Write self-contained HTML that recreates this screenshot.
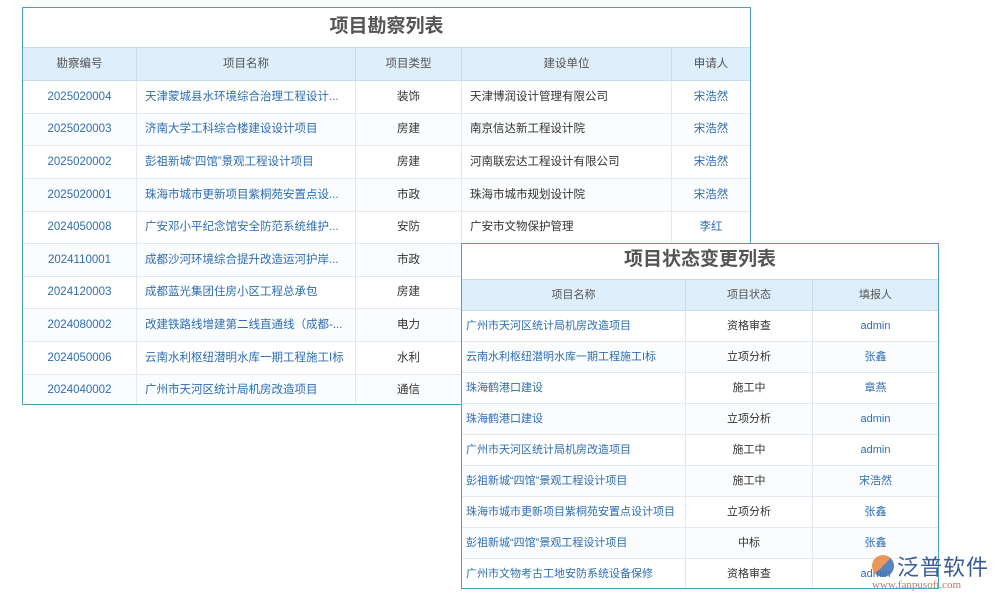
<!DOCTYPE html>
<html><head><meta charset="utf-8"><style>
body{margin:0;width:1000px;height:600px;background:#fff;position:relative;overflow:hidden;font-family:"Liberation Sans","Noto Sans CJK SC",sans-serif;}
.t{position:absolute;background:#fff;border:1px solid #4aa3bd;box-sizing:border-box;overflow:hidden;}
.ttl{text-align:center;font-weight:bold;color:#555;font-size:19px;border-bottom:1px solid #c9dcec;box-sizing:border-box;}
.r{display:flex;border-bottom:1px solid #e3e9ee;box-sizing:border-box;font-size:11.5px;}
.r>div{border-right:1px solid #e3e9ee;box-sizing:border-box;text-align:center;white-space:nowrap;overflow:hidden;text-overflow:ellipsis;padding:0 8px;}
.r>div:last-child{border-right:none;}
.h{background:#deeefb;color:#555;border-bottom-color:#c9dcec;}
.h>div{border-right-color:#c9dcec;}
.r:nth-child(odd):not(.h){background:#fafcfd;}
.l{text-align:left!important;color:#2e6db4;}
.b{color:#2e6db4;}
.k{color:#333;}
.kl{text-align:left!important;color:#333;}
</style></head><body>
<div class="t" style="left:22px;top:7px;width:729px;height:398px;">
<div class="ttl" style="height:40px;line-height:38px;">项目勘察列表</div>
<div id="a"></div>
</div>
<div class="t" style="left:461px;top:243px;width:478px;height:346px;">
<div class="ttl" style="height:36px;line-height:32px;">项目状态变更列表</div>
<div id="b"></div>
</div>
<div style="position:absolute;left:872px;top:555px;width:22px;height:22px;border-radius:50%;background:linear-gradient(135deg,#e8833a 50%,#3c6fb0 50%);opacity:.85"></div>
<div style="position:absolute;left:897px;top:550px;font-size:22px;color:#3a5a95;letter-spacing:1px;">泛普软件</div>
<div style="position:absolute;left:872px;top:579px;font-size:11px;color:#c07a60;font-family:'Liberation Serif',serif;">www.fanpusoft.com</div>
<script>
function mk(id,widths,hh,rows,heights){
 var s='';
 rows.forEach(function(r,i){
  var h=heights[i];
  s+='<div class="r'+(i==0?' h':'')+'" style="height:'+h+'px;line-height:'+(h-1)+'px">';
  r.forEach(function(c,j){
   var cls=i==0?'':c[0];var txt=i==0?c:c[1];
   s+='<div class="'+cls+'" style="'+(widths[j]?'width:'+widths[j]+'px;':'flex:1;')+(id=='b'&&j==0&&i>0?'padding:0 4px;':'')+'">'+txt+'</div>';
  });
  s+='</div>';
 });
 document.getElementById(id).innerHTML=s;
}
var A=[["勘察编号","项目名称","项目类型","建设单位","申请人"],
[["b","2025020004"],["l","天津蒙城县水环境综合治理工程设计..."],["k","装饰"],["kl","天津博润设计管理有限公司"],["b","宋浩然"]],
[["b","2025020003"],["l","济南大学工科综合楼建设设计项目"],["k","房建"],["kl","南京信达新工程设计院"],["b","宋浩然"]],
[["b","2025020002"],["l","彭祖新城“四馆”景观工程设计项目"],["k","房建"],["kl","河南联宏达工程设计有限公司"],["b","宋浩然"]],
[["b","2025020001"],["l","珠海市城市更新项目紫桐苑安置点设..."],["k","市政"],["kl","珠海市城市规划设计院"],["b","宋浩然"]],
[["b","2024050008"],["l","广安邓小平纪念馆安全防范系统维护..."],["k","安防"],["kl","广安市文物保护管理"],["b","李红"]],
[["b","2024110001"],["l","成都沙河环境综合提升改造运河护岸..."],["k","市政"],["kl",""],["b",""]],
[["b","2024120003"],["l","成都蓝光集团住房小区工程总承包"],["k","房建"],["kl",""],["b",""]],
[["b","2024080002"],["l","改建铁路线增建第二线直通线（成都-..."],["k","电力"],["kl",""],["b",""]],
[["b","2024050006"],["l","云南水利枢纽潜明水库一期工程施工I标"],["k","水利"],["kl",""],["b",""]],
[["b","2024040002"],["l","广州市天河区统计局机房改造项目"],["k","通信"],["kl",""],["b",""]]];
mk('a',[114,219,106,210,0],0,A,[33,33,32,33,33,32,33,32,33,33,31]);
var B=[["项目名称","项目状态","填报人"],
[["l","广州市天河区统计局机房改造项目"],["k","资格审查"],["b","admin"]],
[["l","云南水利枢纽潜明水库一期工程施工I标"],["k","立项分析"],["b","张鑫"]],
[["l","珠海鹤港口建设"],["k","施工中"],["b","章燕"]],
[["l","珠海鹤港口建设"],["k","立项分析"],["b","admin"]],
[["l","广州市天河区统计局机房改造项目"],["k","施工中"],["b","admin"]],
[["l","彭祖新城“四馆”景观工程设计项目"],["k","施工中"],["b","宋浩然"]],
[["l","珠海市城市更新项目紫桐苑安置点设计项目"],["k","立项分析"],["b","张鑫"]],
[["l","彭祖新城“四馆”景观工程设计项目"],["k","中标"],["b","张鑫"]],
[["l","广州市文物考古工地安防系统设备保修"],["k","资格审查"],["b","admin"]]];
mk('b',[224,127,0],0,B,[31,31,31,31,31,31,31,31,31,31]);
document.querySelectorAll('#b .r').forEach(function(r){r.style.fontSize='11px';});
</script>
</body></html>
